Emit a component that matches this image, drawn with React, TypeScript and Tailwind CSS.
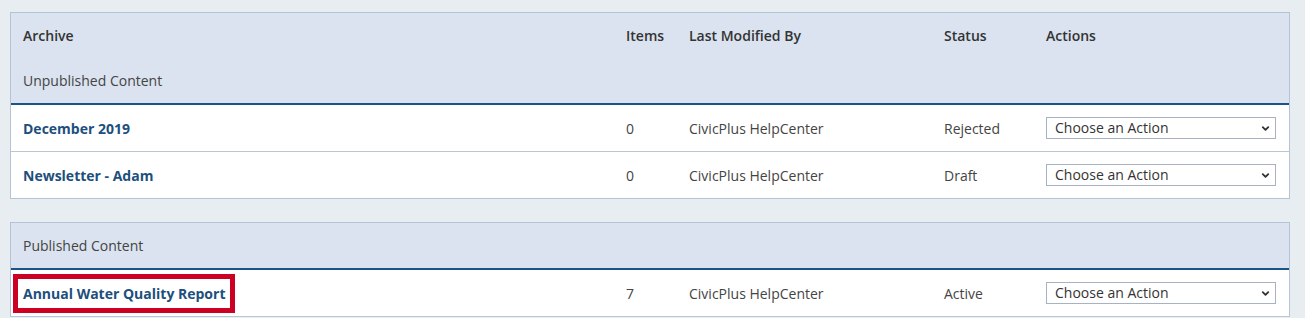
import { ChevronDown } from "lucide-react";

type Row = { title: string; items: number; by: string; status: string; highlight?: boolean };

const unpublished: Row[] = [
  { title: "December 2019", items: 0, by: "CivicPlus HelpCenter", status: "Rejected" },
  { title: "Newsletter - Adam", items: 0, by: "CivicPlus HelpCenter", status: "Draft" },
];

const published: Row[] = [
  { title: "Annual Water Quality Report", items: 7, by: "CivicPlus HelpCenter", status: "Active", highlight: true },
];

const cols = "grid grid-cols-[603px_63px_255px_102px_1fr]";

function ActionSelect() {
  return (
    <div className="relative w-[230px]">
      <select className="w-full h-[22px] appearance-none border border-[#a7b3c2] bg-white pl-[8px] pr-6 text-[14px] text-[#333] leading-none outline-none">
        <option>Choose an Action</option>
      </select>
      <ChevronDown className="pointer-events-none absolute right-[5px] top-[6px] w-[11px] h-[11px] text-[#333]" strokeWidth={4} />
    </div>
  );
}

function DataRow({ row, last }: { row: Row; last?: boolean }) {
  return (
    <div className={`${cols} items-center text-[14px] text-[#444] ${last ? "h-[46px]" : "h-[47px] border-b border-[#b9c6d6]"}`}>
      <div className="pl-[12px]">
        {row.highlight ? (
          <span className="inline-block -ml-[10px] border-[5px] border-[#cc0022] px-[5px] py-[4px] font-bold text-[#1d4f7c]">
            {row.title}
          </span>
        ) : (
          <span className="font-bold text-[#1d4f7c]">{row.title}</span>
        )}
      </div>
      <div className="pl-[12px]">{row.items}</div>
      <div className="pl-[12px]">{row.by}</div>
      <div className="pl-[12px]">{row.status}</div>
      <div className="pl-[12px]">
        <ActionSelect />
      </div>
    </div>
  );
}

export default function App() {
  return (
    <div className="min-h-[318px] bg-[#e8edf2] pt-[12px] pl-[10px] pr-[15px] font-['Open_Sans',sans-serif]">
      <div className="border border-[#b4c3d6] bg-white">
        <div className="bg-[#dae3ef] border-b-2 border-[#1b5587]">
          <div className={`${cols} h-[45px] items-center text-[14px] font-semibold text-[#333]`}>
            <div className="pl-[12px]">Archive</div>
            <div className="pl-[12px]">Items</div>
            <div className="pl-[12px]">Last Modified By</div>
            <div className="pl-[12px]">Status</div>
            <div className="pl-[12px]">Actions</div>
          </div>
          <div className="h-[45px] flex items-center pl-[12px] text-[14px] text-[#444]">Unpublished Content</div>
        </div>
        {unpublished.map((r, i) => (
          <DataRow key={r.title} row={r} last={i === unpublished.length - 1} />
        ))}
      </div>

      <div className="mt-[23px] border border-[#b4c3d6] border-b-0 bg-white">
        <div className="bg-[#dae3ef] border-b-2 border-[#1b5587] h-[47px] flex items-center pl-[12px] text-[14px] text-[#444]">
          Published Content
        </div>
        {published.map((r) => (
          <DataRow key={r.title} row={r} />
        ))}
      </div>
    </div>
  );
}
